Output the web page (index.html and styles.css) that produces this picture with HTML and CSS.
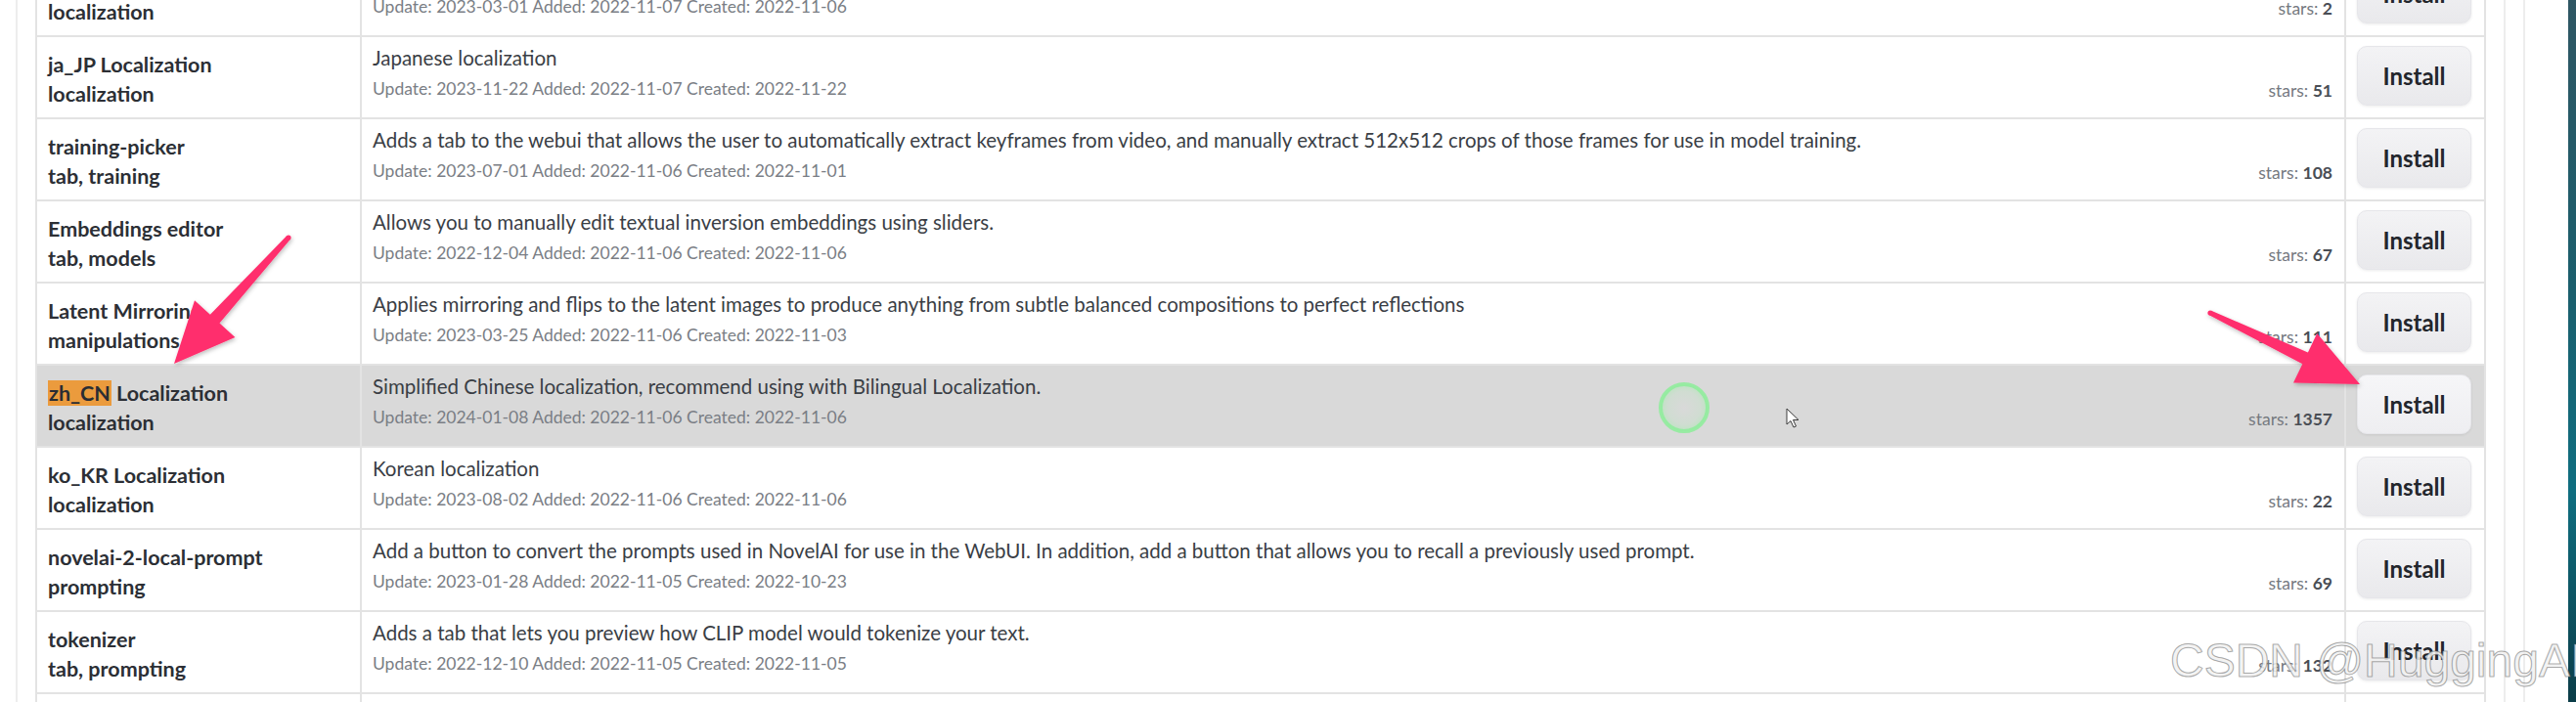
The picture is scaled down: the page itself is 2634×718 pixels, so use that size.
FILE: index.html
```html
<!DOCTYPE html>
<html lang="en">
<head>
<meta charset="utf-8">
<title>Extensions</title>
<link rel="stylesheet" href="styles.css">
</head>
<body>
<div class="screen">
  <div class="page">
    <div class="panel">
      <div class="ext-list">
        <div class="row">
          <div class="cell name-cell"><div class="ext-name">zh_TW Localization</div><div class="ext-tags">localization</div></div>
          <div class="cell desc-cell"><div class="ext-desc">Traditional Chinese localization</div><div class="meta"><span class="dates">Update: 2023-03-01 Added: 2022-11-07 Created: 2022-11-06</span><span class="stars">stars: <b>2</b></span></div></div>
          <div class="cell btn-cell"><button class="install">Install</button></div>
        </div>
        <div class="row">
          <div class="cell name-cell"><div class="ext-name">ja_JP Localization</div><div class="ext-tags">localization</div></div>
          <div class="cell desc-cell"><div class="ext-desc">Japanese localization</div><div class="meta"><span class="dates">Update: 2023-11-22 Added: 2022-11-07 Created: 2022-11-22</span><span class="stars">stars: <b>51</b></span></div></div>
          <div class="cell btn-cell"><button class="install">Install</button></div>
        </div>
        <div class="row">
          <div class="cell name-cell"><div class="ext-name">training-picker</div><div class="ext-tags">tab, training</div></div>
          <div class="cell desc-cell"><div class="ext-desc">Adds a tab to the webui that allows the user to automatically extract keyframes from video, and manually extract 512x512 crops of those frames for use in model training.</div><div class="meta"><span class="dates">Update: 2023-07-01 Added: 2022-11-06 Created: 2022-11-01</span><span class="stars">stars: <b>108</b></span></div></div>
          <div class="cell btn-cell"><button class="install">Install</button></div>
        </div>
        <div class="row">
          <div class="cell name-cell"><div class="ext-name">Embeddings editor</div><div class="ext-tags">tab, models</div></div>
          <div class="cell desc-cell"><div class="ext-desc">Allows you to manually edit textual inversion embeddings using sliders.</div><div class="meta"><span class="dates">Update: 2022-12-04 Added: 2022-11-06 Created: 2022-11-06</span><span class="stars">stars: <b>67</b></span></div></div>
          <div class="cell btn-cell"><button class="install">Install</button></div>
        </div>
        <div class="row">
          <div class="cell name-cell"><div class="ext-name">Latent Mirroring</div><div class="ext-tags">manipulations</div></div>
          <div class="cell desc-cell"><div class="ext-desc">Applies mirroring and flips to the latent images to produce anything from subtle balanced compositions to perfect reflections</div><div class="meta"><span class="dates">Update: 2023-03-25 Added: 2022-11-06 Created: 2022-11-03</span><span class="stars">stars: <b>111</b></span></div></div>
          <div class="cell btn-cell"><button class="install">Install</button></div>
        </div>
        <div class="row row-hover">
          <div class="cell name-cell"><div class="ext-name"><mark class="match">zh_CN</mark> Localization</div><div class="ext-tags">localization</div></div>
          <div class="cell desc-cell"><div class="ext-desc">Simplified Chinese localization, recommend using with Bilingual Localization.</div><div class="meta"><span class="dates">Update: 2024-01-08 Added: 2022-11-06 Created: 2022-11-06</span><span class="stars">stars: <b>1357</b></span></div></div>
          <div class="cell btn-cell"><button class="install">Install</button></div>
        </div>
        <div class="row">
          <div class="cell name-cell"><div class="ext-name">ko_KR Localization</div><div class="ext-tags">localization</div></div>
          <div class="cell desc-cell"><div class="ext-desc">Korean localization</div><div class="meta"><span class="dates">Update: 2023-08-02 Added: 2022-11-06 Created: 2022-11-06</span><span class="stars">stars: <b>22</b></span></div></div>
          <div class="cell btn-cell"><button class="install">Install</button></div>
        </div>
        <div class="row">
          <div class="cell name-cell"><div class="ext-name">novelai-2-local-prompt</div><div class="ext-tags">prompting</div></div>
          <div class="cell desc-cell"><div class="ext-desc">Add a button to convert the prompts used in NovelAI for use in the WebUI. In addition, add a button that allows you to recall a previously used prompt.</div><div class="meta"><span class="dates">Update: 2023-01-28 Added: 2022-11-05 Created: 2022-10-23</span><span class="stars">stars: <b>69</b></span></div></div>
          <div class="cell btn-cell"><button class="install">Install</button></div>
        </div>
        <div class="row">
          <div class="cell name-cell"><div class="ext-name">tokenizer</div><div class="ext-tags">tab, prompting</div></div>
          <div class="cell desc-cell"><div class="ext-desc">Adds a tab that lets you preview how CLIP model would tokenize your text.</div><div class="meta"><span class="dates">Update: 2022-12-10 Added: 2022-11-05 Created: 2022-11-05</span><span class="stars">stars: <b>132</b></span></div></div>
          <div class="cell btn-cell"><button class="install">Install</button></div>
        </div>
        <div class="row">
          <div class="cell name-cell"><div class="ext-name">Smart Process</div><div class="ext-tags">tab, training</div></div>
          <div class="cell desc-cell"><div class="ext-desc">Smart pre-process including auto subject identification, caption subject swapping, and upscaling/facial restoration.</div><div class="meta"><span class="dates">Update: 2023-03-22 Added: 2022-11-05 Created: 2022-11-05</span><span class="stars">stars: <b>180</b></span></div></div>
          <div class="cell btn-cell"><button class="install">Install</button></div>
        </div>
      </div>
    </div>
    <div class="gutter"></div>
  </div>
  <div class="wallpaper"></div>

  <svg class="annotations" width="2634" height="718" viewBox="0 0 2634 718" aria-hidden="true">
    <defs>
      <radialGradient id="ringfill" cx="50%" cy="50%" r="50%">
        <stop offset="0%" stop-color="#9ef0a8" stop-opacity="0"/>
        <stop offset="70%" stop-color="#9ef0a8" stop-opacity="0.15"/>
        <stop offset="100%" stop-color="#9ef0a8" stop-opacity="0.45"/>
      </radialGradient>
      <filter id="shadow" x="-20%" y="-20%" width="140%" height="140%">
        <feDropShadow dx="1" dy="2" stdDeviation="2" flood-color="#000" flood-opacity="0.25"/>
      </filter>
    </defs>
    <g fill="#ff2f6d" filter="url(#shadow)">
      <polygon points="296.9,244.7 224.5,330.5 240.4,344.9 178,372 199,307.3 214.9,321.7 293.1,241.3"/>
      <circle cx="295" cy="243" r="2.6"/>
      <polygon points="2258.9,322.3 2354.3,372.2 2345.0,391.6 2413,393 2369.2,341.0 2359.9,360.4 2261.1,317.7"/>
      <circle cx="2260" cy="320" r="2.6"/>
    </g>
    <circle cx="1722" cy="417" r="24" fill="url(#ringfill)" stroke="#90ec9c" stroke-width="4" stroke-opacity="0.9"/>
    <path d="M1827 418 L1827 434 L1831 430.5 L1834 437 L1836.5 436 L1833.5 429.5 L1839 429.5 Z" fill="#ffffff" stroke="#3a3a3a" stroke-width="1" stroke-linejoin="round"/>
  </svg>
  <div class="watermark">CSDN @HuggingAI</div>
</div>
</body>
</html>
```

FILE: styles.css
```css
* { box-sizing: border-box; }

html, body {
  margin: 0;
  padding: 0;
  background: #ffffff;
}

.screen {
  position: relative;
  display: flex;
  width: 2634px;
  height: 718px;
  overflow: hidden;
  font-family: Lato, "Noto Sans", sans-serif;
}

.page {
  flex: 1;
  display: flex;
  padding-left: 16px;
  background: #ffffff;
}

.panel {
  flex: 0 0 auto;
  border-left: 2px solid #ededed;
  border-right: 2px solid #ededed;
  padding: 0 18px;
}

.gutter {
  width: 20px;
  border-right: 2px solid #ededed;
}

.wallpaper {
  width: 8px;
  background: linear-gradient(180deg, #2f5663 0%, #1b5e6c 40%, #0f6e80 70%, #0b3d48 100%);
}

.ext-list {
  width: 2506px;
  margin-top: -46px;
  border-left: 2px solid #e3e3e3;
  border-right: 2px solid #e3e3e3;
}

.row {
  display: grid;
  grid-template-columns: 332px 1fr 141px;
  height: 84px;
  border-bottom: 2px solid #e3e3e3;
  background: #ffffff;
}

.row-hover {
  background: #d9d9d9;
}

.cell {
  min-width: 0;
}

.name-cell {
  border-right: 2px solid #e3e3e3;
  padding: 13px 11px 0 11px;
  font-weight: 700;
  font-size: 21.5px;
  line-height: 30px;
  color: #2c2f35;
}

.ext-name, .ext-tags {
  white-space: nowrap;
}

.match {
  background: #eb9b3d;
  color: #2a2d33;
  padding: 0 1px;
}

.desc-cell {
  border-right: 2px solid #e3e3e3;
  padding: 5px 12px 0 11px;
  display: flex;
  flex-direction: column;
}

.ext-desc {
  font-size: 20.5px;
  line-height: 32px;
  color: #3a3e45;
  white-space: nowrap;
}

.meta {
  display: flex;
  justify-content: space-between;
  align-items: baseline;
  line-height: 32px;
  font-size: 17.5px;
  color: #7a7e85;
}

.stars {
  position: relative;
  top: 2px;
  color: #75797f;
}

.stars b {
  color: #4a4e55;
  font-weight: 700;
}

.btn-cell {
  padding: 9px 12px 0 11px;
}

.install {
  display: block;
  width: 117px;
  height: 61px;
  border: 1px solid #e6e6ea;
  border-radius: 10px;
  background: linear-gradient(180deg, #f3f3f5 0%, #e9e9ec 100%);
  box-shadow: 0 1px 3px rgba(0, 0, 0, 0.08);
  font-family: Lato, "Noto Sans", sans-serif;
  font-weight: 700;
  font-size: 24px;
  color: #23262c;
  padding: 0;
}

.row-hover .install {
  background: linear-gradient(180deg, #f6f6f8 0%, #eeeef1 100%);
}

.annotations {
  position: absolute;
  left: 0;
  top: 0;
  pointer-events: none;
}

.watermark {
  position: absolute;
  left: 2219px;
  top: 648px;
  font-family: "Liberation Sans", Arial, sans-serif;
  font-size: 48px;
  line-height: 56px;
  white-space: nowrap;
  color: rgba(255, 255, 255, 0.82);
  -webkit-text-stroke: 1px rgba(110, 110, 110, 0.55);
  text-shadow: 0 0 1px rgba(0, 0, 0, 0.25);
  pointer-events: none;
}
```
